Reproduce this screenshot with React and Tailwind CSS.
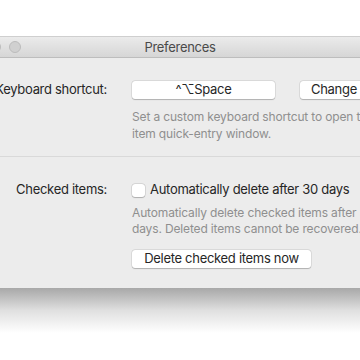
export default function App() {
  return (
    <div className="relative w-[360px] h-[360px] overflow-hidden bg-white font-['Inter','Liberation_Sans',sans-serif] text-[13px] tracking-[-0.3px] text-[#262626]">
      <div className="h-[36px] bg-white" />

      {/* Window */}
      <div className="border-t border-[#cfcfcf]">
        {/* Title bar */}
        <div className="relative h-[21px] bg-gradient-to-b from-[#ebebeb] to-[#d6d6d6] border-b border-[#bdbdbd] flex items-center justify-center">
          <div className="absolute left-[-11px] top-[4px] flex gap-[8px]">
            <span className="w-[12px] h-[12px] rounded-full bg-[#d0d0d0] border border-[#bcbcbc]" />
            <span className="w-[12px] h-[12px] rounded-full bg-[#d0d0d0] border border-[#bcbcbc]" />
          </div>
          <span className="text-[#4a4a4a] leading-none">Preferences</span>
        </div>

        {/* Body */}
        <div className="h-[230px] bg-[#ececec]">
          <div className="pt-[23px] grid grid-cols-[107px_1fr] gap-x-[25px]">
            <div className="text-right whitespace-nowrap flex items-center justify-end h-[18px]">
              Keyboard shortcut:
            </div>
            <div className="flex items-center gap-[25px] whitespace-nowrap">
              <div className="w-[143px] h-[18px] bg-white rounded-[3px] shadow-[0_0_0_0.5px_rgba(0,0,0,0.12),0_0.5px_1px_rgba(0,0,0,0.2)] flex items-center justify-center">
                ^⌥Space
              </div>
              <div className="w-[68px] h-[18px] bg-white rounded-[3px] shadow-[0_0_0_0.5px_rgba(0,0,0,0.12),0_0.5px_1px_rgba(0,0,0,0.2)] flex items-center justify-center shrink-0">
                Change
              </div>
            </div>
            <div />
            <div className="mt-[9px] text-[12px] leading-[17px] tracking-[-0.15px] text-[#8f8f8f] whitespace-nowrap">
              <div>Set a custom keyboard shortcut to open the</div>
              <div>item quick-entry window.</div>
            </div>
          </div>

          <div className="mt-[14px] h-px bg-[#d9d9d9]" />

          <div className="pt-[25px] grid grid-cols-[107px_1fr] gap-x-[25px]">
            <div className="text-right whitespace-nowrap flex items-center justify-end h-[16px]">
              Checked items:
            </div>
            <div className="flex items-center gap-[5px] whitespace-nowrap h-[16px]">
              <span className="w-[13px] h-[13px] bg-white rounded-[3px] shadow-[0_0_0_0.5px_rgba(0,0,0,0.15),0_0.5px_1px_rgba(0,0,0,0.2)] shrink-0" />
              <span>Automatically delete after 30 days</span>
            </div>
            <div />
            <div className="mt-[7px] text-[12px] leading-[16px] tracking-[-0.15px] text-[#8f8f8f] whitespace-nowrap">
              <div>Automatically delete checked items after 30</div>
              <div>days. Deleted items cannot be recovered.</div>
            </div>
            <div />
            <div className="mt-[13px]">
              <div className="w-[179px] h-[18px] bg-white rounded-[3px] shadow-[0_0_0_0.5px_rgba(0,0,0,0.12),0_0.5px_1px_rgba(0,0,0,0.2)] flex items-center justify-center whitespace-nowrap">
                Delete checked items now
              </div>
            </div>
          </div>
        </div>

        {/* Shadow */}
        <div className="h-[45px] bg-gradient-to-b from-[#a8a8a8] via-[#e0e0e0] to-white" />
      </div>
    </div>
  );
}
